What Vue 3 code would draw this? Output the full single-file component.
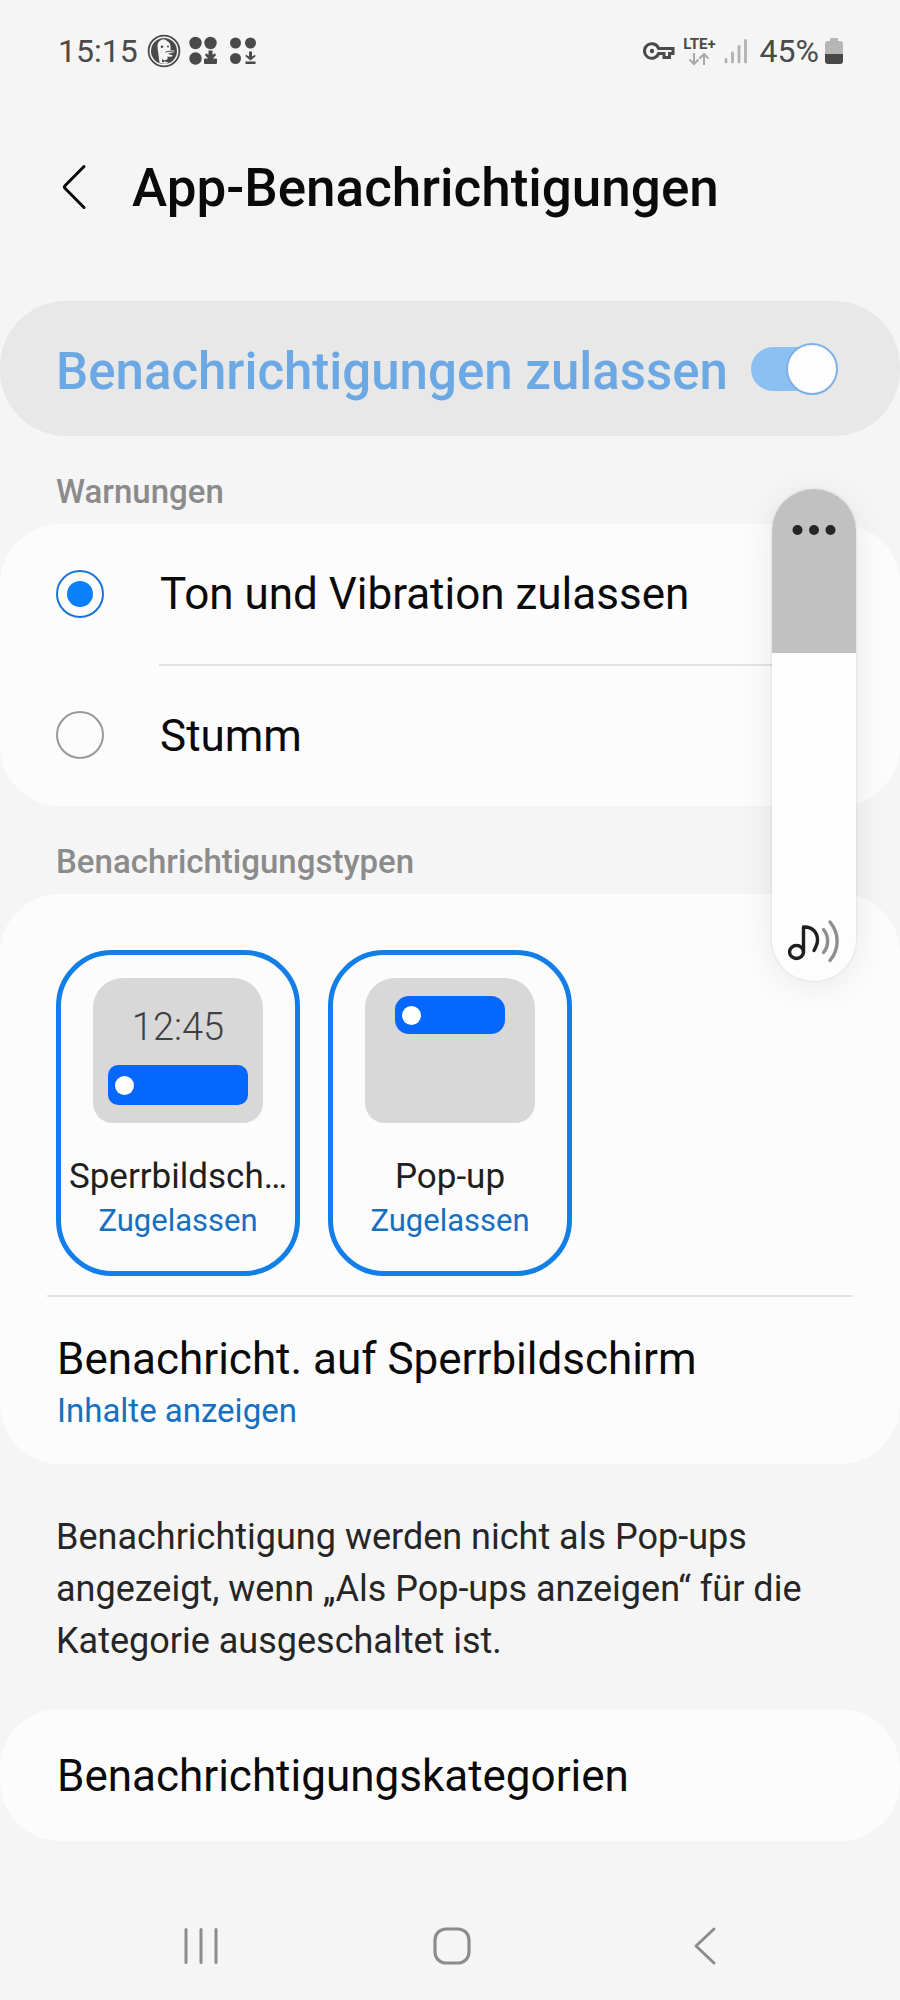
<script setup>
import { ref, computed } from 'vue'

const allowed = ref(true)
const alertMode = ref('sound')
const maxVolume = 15
const volume = ref(10)

const alertOptions = [
  { id: 'sound', label: 'Ton und Vibration zulassen' },
  { id: 'silent', label: 'Stumm' },
]

const types = ref([
  { id: 'lock', label: 'Sperrbildsch…', on: true },
  { id: 'popup', label: 'Pop-up', on: true },
])

const volumeFill = computed(() => {
  const level = (volume.value / maxVolume) * 100
  return { background: `linear-gradient(to top, #fdfdfd ${level}%, #c1c1c1 ${level}%)` }
})
</script>

<template>
  <div class="screen">
    <div class="status">
      <div class="status-side">
        <span class="clock">15:15</span>
        <svg class="duck" width="34" height="34" viewBox="0 0 34 34" aria-hidden="true">
          <circle cx="17" cy="17" r="15.4" fill="none" stroke="#4a4a4a" stroke-width="1.8" />
          <circle cx="17" cy="17" r="13" fill="#4a4a4a" />
          <path d="M12.5 28.5 10.6 14c-.5-4 .6-6.6 3.4-8 1.8-1.2 4.2-.6 5.6.8 2.6 1.1 4 3.3 4 6.600l-.2 3c2.200-.2 4.200.2 4 1.200-.2 1.100-4.200 1.800-6.400 2 1.200 1.300 4.400 1 4.600 2.200.1 1-3.200 1.400-5.200.6l.6 6.600c-2.600 1.200-5.700 1.200-8.500-.5z" fill="#f5f5f5" />
          <circle cx="15" cy="12.800" r="1.300" fill="#4a4a4a" />
          <circle cx="21" cy="12.500" r="1" fill="#4a4a4a" />
          <path d="M18.500 18.200c2-1.200 5-.8 8-.8" fill="none" stroke="#4a4a4a" stroke-width="1" />
          <path d="m15 25 2.600 1.500L21 25v3.500l-3-1-3 1z" fill="#4a4a4a" />
        </svg>
        <svg class="dots" width="28" height="30" viewBox="0 0 28 30" fill="#4a4a4a" aria-hidden="true">
          <circle cx="6.500" cy="7" r="6.200" />
          <circle cx="21.500" cy="7" r="6.200" />
          <circle cx="6.500" cy="22.500" r="6.200" />
          <path d="M19.500 14.500h4v4.200l2.500-1.400 1 2-3.200 3.200H27a1 1 0 0 1 1 1V27a1 1 0 0 1-1 1H16a1 1 0 0 1-1-1v-3.500a1 1 0 0 1 1-1h3.200L16 19.300l1-2 2.500 1.400z" />
        </svg>
        <svg class="dots-small" width="28" height="30" viewBox="0 0 28 30" fill="#4a4a4a" aria-hidden="true">
          <circle cx="6.500" cy="7" r="5.500" />
          <circle cx="21.500" cy="7" r="5.500" />
          <circle cx="6.500" cy="22.500" r="5.500" />
          <path d="M20 15.500h3v5l3-1.800.6 1.600-5.100 4.200-5.100-4.200.6-1.600 3 1.800zM16.500 25.500h10V28h-10z" />
        </svg>
      </div>
      <div class="status-side">
        <svg class="key" width="32" height="22" viewBox="0 0 32 22" fill="none" stroke="#4a4a4a" stroke-width="3" aria-hidden="true">
          <path d="M15.600 8.500a7.300 7.300 0 1 0 0 5H21V17.500h5.500v-4H30v-5z" stroke-linejoin="miter" />
          <circle cx="9" cy="11" r="2.200" fill="#4a4a4a" stroke="none" />
        </svg>
        <div class="network">
          <span class="lte">LTE+</span>
          <svg width="22" height="14" viewBox="0 0 22 14" fill="none" stroke="#a8a8a8" stroke-width="2" aria-hidden="true">
            <path d="M6 1v11M1.500 7.500 6 12l4.500-4.500M16 13V2M11.500 6.500 16 2l4.500 4.500" />
          </svg>
        </div>
        <svg class="signal" width="24" height="26" viewBox="0 0 24 26" stroke="#b2b2b2" stroke-width="2.800" stroke-linecap="round" aria-hidden="true">
          <path d="M2 24v-2.500M8.500 24v-9M15 24V8.500M21.500 24V2.500" />
        </svg>
        <span class="percent">45%</span>
        <svg width="18" height="28" viewBox="0 0 18 28" aria-hidden="true">
          <path d="M6 1h6a1 1 0 0 1 1 1v2h2a3 3 0 0 1 3 3v10H0V7a3 3 0 0 1 3-3h2V2a1 1 0 0 1 1-1z" fill="#b6b6b6" />
          <path d="M0 17h18v7a3 3 0 0 1-3 3H3a3 3 0 0 1-3-3z" fill="#484848" />
        </svg>
      </div>
    </div>

    <header class="header">
      <button class="back" type="button" aria-label="Zurück">
        <svg width="28" height="48" viewBox="0 0 28 48" fill="none" stroke="#0a0a0a" stroke-width="3" stroke-linecap="round" stroke-linejoin="round" aria-hidden="true">
          <path d="M24 2.500 5.200 21.500q-1.500 1.500 0 3L24 43.500" />
        </svg>
      </button>
      <h1>App-Benachrichtigungen</h1>
    </header>

    <main>
      <label class="master">
        <span class="master-text">Benachrichtigungen zulassen</span>
        <input v-model="allowed" type="checkbox" role="switch" class="switch" />
      </label>

      <h2 id="alerts">Warnungen</h2>
      <section class="card" role="radiogroup" aria-labelledby="alerts">
        <label v-for="option in alertOptions" :key="option.id" class="option">
          <input v-model="alertMode" type="radio" name="alert" :value="option.id" />
          <span class="option-text">{{ option.label }}</span>
        </label>
      </section>

      <h2>Benachrichtigungstypen</h2>
      <section class="card">
        <div class="types">
          <button
            v-for="type in types"
            :key="type.id"
            type="button"
            class="type"
            :class="{ active: type.on }"
            :aria-pressed="type.on"
            @click="type.on = !type.on"
          >
            <span class="preview" :class="type.id">
              <span v-if="type.id === 'lock'" class="preview-time">12:45</span>
              <span class="bubble"><span class="bubble-dot"></span></span>
            </span>
            <span class="type-name">{{ type.label }}</span>
            <span class="type-state">{{ type.on ? 'Zugelassen' : 'Aus' }}</span>
          </button>
        </div>
        <hr />
        <button type="button" class="entry">
          <span class="entry-title">Benachricht. auf Sperrbildschirm</span>
          <span class="entry-value">Inhalte anzeigen</span>
        </button>
      </section>

      <p class="hint">Benachrichtigung werden nicht als Pop-ups angezeigt, wenn „Als Pop-ups anzeigen“ für die Kategorie ausgeschaltet ist.</p>

      <section class="card">
        <button type="button" class="entry single">
          <span class="entry-title">Benachrichtigungskategorien</span>
        </button>
      </section>
    </main>

    <nav class="navbar">
      <button type="button" aria-label="Letzte Apps">
        <svg width="40" height="40" viewBox="0 0 40 40" stroke="#8c8c8c" stroke-width="3" stroke-linecap="round" aria-hidden="true">
          <path d="M5 3.500v33M20 3.500v33M35 3.500v33" />
        </svg>
      </button>
      <button type="button" aria-label="Startbildschirm">
        <svg width="40" height="40" viewBox="0 0 40 40" fill="none" stroke="#8c8c8c" stroke-width="3.200" aria-hidden="true">
          <rect x="3" y="3" width="34" height="34" rx="11" />
        </svg>
      </button>
      <button type="button" aria-label="Zurück">
        <svg width="40" height="40" viewBox="0 0 40 40" fill="none" stroke="#8c8c8c" stroke-width="3" stroke-linecap="round" stroke-linejoin="round" aria-hidden="true">
          <path d="M31 3 13 20l18 17" />
        </svg>
      </button>
    </nav>

    <div class="volume">
      <input v-model.number="volume" type="range" min="0" :max="maxVolume" aria-label="Lautstärke" :style="volumeFill" />
      <button type="button" class="more" aria-label="Weitere Lautstärkeoptionen">
        <svg width="44" height="12" viewBox="0 0 44 12" fill="#262626" aria-hidden="true">
          <circle cx="5.500" cy="6" r="5" />
          <circle cx="22" cy="6" r="5" />
          <circle cx="38.500" cy="6" r="5" />
        </svg>
      </button>
      <svg class="note" width="52" height="44" viewBox="0 0 52 44" fill="none" stroke-width="3.400" stroke-linecap="round" stroke-linejoin="round" aria-hidden="true">
        <g stroke="#1e1e1e">
          <ellipse cx="9.500" cy="33" rx="7" ry="6.500" />
          <path d="M16.500 33V8c9-.5 14 5.500 14 13 0 4-1.500 7-3.500 10.500" />
        </g>
        <g stroke="#8e8e8e">
          <path d="M36.500 10.500c5.500 6.500 5.500 16.500 0 23" />
          <path d="M43 3c9.500 11.500 9.500 27 0 38.500" />
        </g>
      </svg>
    </div>
  </div>
</template>

<style>
body {
  margin: 0;
  background: #f5f5f5;
}
</style>

<style scoped>
.screen {
  position: relative;
  display: flex;
  flex-direction: column;
  min-height: 100vh;
  overflow: hidden;
  background: #f5f5f5;
  color: #0a0a0a;
  font-family: Roboto, "Liberation Sans", sans-serif;
}

button {
  padding: 0;
  border: 0;
  background: none;
  color: inherit;
  font: inherit;
  cursor: pointer;
}

svg {
  display: block;
  flex: none;
}

.status {
  display: flex;
  align-items: center;
  justify-content: space-between;
  height: 102px;
  padding: 0 57px 0 58px;
  color: #4a4a4a;
  font-size: 32px;
  line-height: 40px;
}

.status-side {
  display: flex;
  align-items: center;
}

.duck {
  margin-left: 9px;
}

.dots {
  margin-left: 8px;
}

.dots-small {
  margin-left: 12px;
}

.network {
  display: flex;
  flex-direction: column;
  align-items: center;
  margin-left: 8px;
}

.lte {
  font-size: 15px;
  font-weight: 700;
  line-height: 16px;
}

.signal {
  margin-left: 8px;
}

.percent {
  margin: 0 6px 0 12px;
}

.header {
  display: flex;
  align-items: center;
  height: 172px;
  padding: 0 60px;
}

.back {
  margin-right: 44px;
}

h1 {
  margin: 0;
  font-size: 53px;
  font-weight: 500;
  line-height: 64px;
}

main {
  padding-top: 27px;
}

.master {
  display: flex;
  align-items: center;
  justify-content: space-between;
  min-height: 135px;
  padding: 0 63px 0 56px;
  border-radius: 66px;
  background: #e8e8e8;
  color: #6ca8e3;
  font-size: 51px;
  font-weight: 500;
  line-height: 60px;
  box-sizing: border-box;
}

.master-text {
  padding-top: 6px;
}

.switch {
  position: relative;
  flex: none;
  width: 86px;
  height: 44px;
  margin: 0;
  border-radius: 22px;
  background: #8cbff2;
  appearance: none;
}

.switch::before {
  content: "";
  position: absolute;
  top: -4px;
  left: -1px;
  width: 52px;
  height: 52px;
  border: 2px solid #7fb0e6;
  border-radius: 50%;
  background: #fdfdfd;
  box-sizing: border-box;
}

.switch:checked::before {
  right: -1px;
  left: auto;
}

h2 {
  margin: 0;
  padding: 36px 56px 12px;
  color: #8b8b8b;
  font-size: 33px;
  font-weight: 500;
  line-height: 40px;
}

.card {
  border-radius: 60px;
  background: #fcfcfc;
}

.option {
  display: flex;
  align-items: stretch;
  padding-left: 56px;
}

.option input {
  align-self: center;
  flex: none;
  display: grid;
  place-items: center;
  width: 48px;
  height: 48px;
  margin: 0 55px 0 0;
  border: 2px solid #999999;
  border-radius: 50%;
  appearance: none;
}

.option input:checked {
  border-color: #1a76d6;
}

.option input:checked::before {
  content: "";
  width: 26px;
  height: 26px;
  border-radius: 50%;
  background: #0a80fb;
}

.option-text {
  flex: 1;
  padding: 44px 0;
  margin-right: 47px;
  padding-left: 1px;
  font-size: 44px;
  line-height: 52px;
}

.option + .option .option-text {
  border-top: 2px solid #e4e4e4;
}

.types {
  display: flex;
  gap: 28px;
  padding: 56px 56px 19px;
}

.type {
  display: flex;
  flex-direction: column;
  align-items: center;
  width: 244px;
  padding: 23px 0 32px;
  border: 5px solid #d0d0d0;
  border-radius: 56px;
  box-sizing: border-box;
}

.type.active {
  border-color: #127fe9;
}

.preview {
  display: flex;
  flex-direction: column;
  align-items: center;
  width: 170px;
  height: 145px;
  margin-bottom: 34px;
  border-radius: 30px 30px 20px 20px;
  background: #d8d8d8;
}

.preview-time {
  margin: 27px 0 16px;
  color: #404040;
  font-size: 38px;
  font-weight: 300;
  line-height: 44px;
}

.bubble {
  display: flex;
  align-items: center;
  padding-left: 7px;
  background: #0667ff;
  box-sizing: border-box;
}

.lock .bubble {
  width: 140px;
  height: 40px;
  border-radius: 10px;
}

.popup .bubble {
  width: 110px;
  height: 38px;
  margin-top: 18px;
  border-radius: 14px;
}

.bubble-dot {
  width: 19px;
  height: 19px;
  border-radius: 50%;
  background: #ffffff;
}

.type-name {
  margin-bottom: 6px;
  color: #1f1f1f;
  font-size: 35px;
  line-height: 40px;
  white-space: nowrap;
}

.type-state {
  color: #176fc1;
  font-size: 31px;
  line-height: 36px;
}

hr {
  height: 2px;
  margin: 0 47px;
  border: 0;
  background: #e4e4e4;
}

.entry {
  display: flex;
  flex-direction: column;
  gap: 6px;
  width: 100%;
  padding: 36px 57px 33px;
  text-align: left;
}

.entry.single {
  padding: 41px 57px 39px;
}

.entry-title {
  font-size: 44px;
  line-height: 52px;
}

.entry-value {
  color: #176fc1;
  font-size: 33px;
  line-height: 40px;
}

.hint {
  margin: 47px 56px 42px;
  color: #262626;
  font-size: 36px;
  line-height: 52px;
}

.navbar {
  display: flex;
  justify-content: space-around;
  margin-top: auto;
  padding: 34px 72px 34px 75px;
}

.volume {
  position: absolute;
  top: 489px;
  right: 44px;
  width: 84px;
  height: 492px;
  border-radius: 42px;
  box-shadow: 0 6px 36px rgba(0, 0, 0, 0.08), 0 0 3px rgba(0, 0, 0, 0.12);
}

.volume input {
  display: block;
  width: 84px;
  height: 492px;
  margin: 0;
  border-radius: 42px;
  writing-mode: vertical-lr;
  direction: rtl;
  appearance: none;
}

.volume input::-webkit-slider-thumb {
  width: 84px;
  height: 4px;
  background: transparent;
  appearance: none;
}

.more {
  position: absolute;
  top: 35px;
  left: 20px;
}

.note {
  position: absolute;
  bottom: 18px;
  left: 15px;
  pointer-events: none;
}
</style>
